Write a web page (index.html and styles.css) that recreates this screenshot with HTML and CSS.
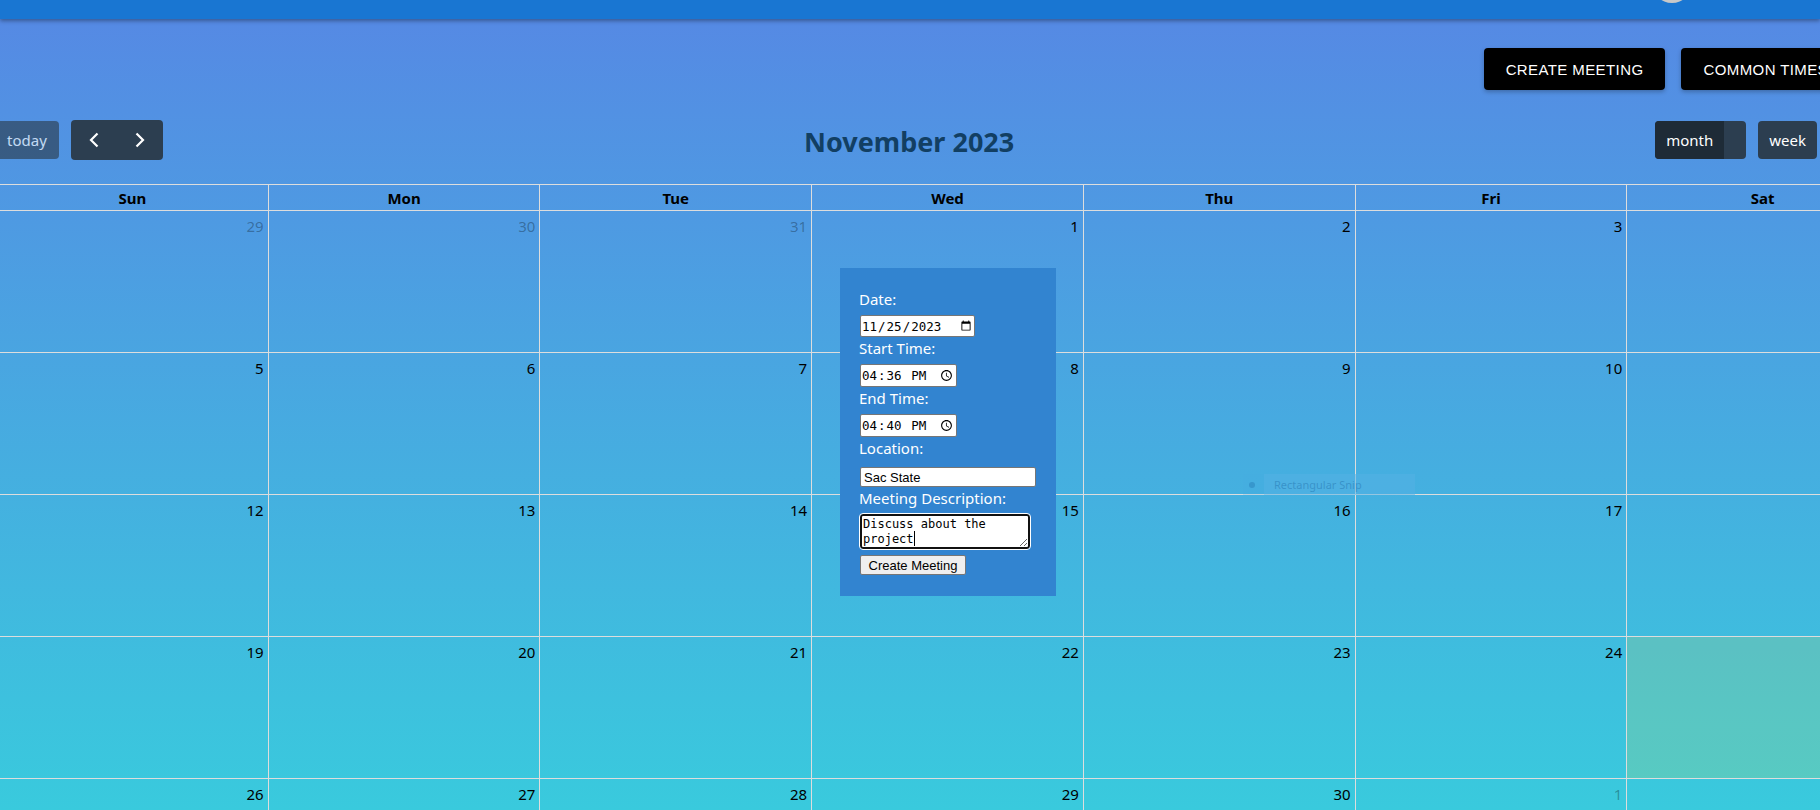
FILE: index.html
```html
<!DOCTYPE html>
<html lang="en">

<head>
  <meta charset="UTF-8">
  <meta name="viewport" content="width=device-width, initial-scale=1.0">
  <title>Calendar</title>
  <link rel="stylesheet" href="styles.css">
</head>

<body>
  <div class="topbar">
    <div class="avatar"></div>
  </div>

  <div class="page">
    <div class="actions">
      <button class="action-btn">CREATE MEETING</button>
      <button class="action-btn">COMMON TIMES</button>
    </div>

    <div class="toolbar">
      <div class="tb-group">
        <button class="fc-btn today">today</button>
        <div class="nav-btns">
          <button class="fc-btn arrow">
            <svg width="12" height="16" viewBox="0 0 12 16"><path d="M9.5 1.5 L3 8 L9.5 14.5" fill="none" stroke="#fff" stroke-width="2.2"/></svg>
          </button>
          <button class="fc-btn arrow">
            <svg width="12" height="16" viewBox="0 0 12 16"><path d="M2.5 1.5 L9 8 L2.5 14.5" fill="none" stroke="#fff" stroke-width="2.2"/></svg>
          </button>
        </div>
      </div>
      <h2 class="title">November 2023</h2>
      <div class="tb-group">
        <div class="view-month">
          <button class="fc-btn month">month</button>
          <span class="month-rest"></span>
        </div>
        <button class="fc-btn">week</button>
        <button class="fc-btn day-btn">day</button>
      </div>
    </div>

    <div class="calendar">
      <div class="head">Sun</div>
      <div class="head">Mon</div>
      <div class="head">Tue</div>
      <div class="head">Wed</div>
      <div class="head">Thu</div>
      <div class="head">Fri</div>
      <div class="head">Sat</div>

      <div class="day other">29</div>
      <div class="day other">30</div>
      <div class="day other">31</div>
      <div class="day">1</div>
      <div class="day">2</div>
      <div class="day">3</div>
      <div class="day">4</div>

      <div class="day">5</div>
      <div class="day">6</div>
      <div class="day">7</div>
      <div class="day">8</div>
      <div class="day">9</div>
      <div class="day">10</div>
      <div class="day">11</div>

      <div class="day">12</div>
      <div class="day">13</div>
      <div class="day">14</div>
      <div class="day">15</div>
      <div class="day">16</div>
      <div class="day">17</div>
      <div class="day">18</div>

      <div class="day">19</div>
      <div class="day">20</div>
      <div class="day">21</div>
      <div class="day">22</div>
      <div class="day">23</div>
      <div class="day">24</div>
      <div class="day current"></div>

      <div class="day">26</div>
      <div class="day">27</div>
      <div class="day">28</div>
      <div class="day">29</div>
      <div class="day">30</div>
      <div class="day other">1</div>
      <div class="day other">2</div>
    </div>
  </div>

  <!-- meeting popup -->
  <form class="popup">
    <label class="field-label">Date:</label>
    <input class="field date" type="date" value="2023-11-25">
    <label class="field-label">Start Time:</label>
    <input class="field time" type="time" value="16:36">
    <label class="field-label">End Time:</label>
    <input class="field time" type="time" value="16:40">
    <label class="field-label location-label">Location:</label>
    <input class="field location" type="text" value="Sac State">
    <label class="field-label">Meeting Description:</label>
    <div class="desc-wrap">
      <textarea class="desc">Discuss about the project</textarea>
      <span class="caret"></span>
    </div>
    <button class="submit" type="button">Create Meeting</button>
  </form>

  <!-- faint snipping tool leftover -->
  <div class="snip">
    <span class="snip-dot"></span>
    <span class="snip-label">Rectangular Snip</span>
  </div>
</body>

</html>
```

FILE: styles.css
```css
* {
  margin: 0;
  padding: 0;
  box-sizing: border-box;
}

html,
body {
  width: 1820px;
  height: 810px;
  overflow: hidden;
}

body {
  font-family: "Noto Sans", "Liberation Sans", sans-serif;
  font-size: 15px;
  background: linear-gradient(180deg, #5688e4 0%, #39cadd 100%);
}

.topbar {
  position: relative;
  height: 19px;
  background-color: #1976d2;
  box-shadow: 0 2px 4px rgba(0, 0, 0, .35);
  overflow: hidden;
}

.avatar {
  position: absolute;
  left: 1652px;
  top: -37px;
  width: 40px;
  height: 40px;
  border-radius: 50%;
  background-color: #c8c8c8;
}

.page {
  width: 1902px;
  margin-left: -3px;
}

.actions {
  display: flex;
  justify-content: flex-end;
  gap: 16px;
  height: 101px;
  padding: 29px 49px 0 0;
}

.action-btn {
  height: 42px;
  padding: 0 22px;
  background-color: #000;
  color: #fff;
  border: none;
  border-radius: 4px;
  font-family: "Liberation Sans", Arial, sans-serif;
  font-size: 15px;
  letter-spacing: .4px;
  box-shadow: 0 2px 4px rgba(0, 0, 0, .25);
}

.toolbar {
  display: flex;
  justify-content: space-between;
  align-items: flex-start;
  height: 64px;
}

.tb-group {
  display: flex;
  align-items: center;
  gap: 12px;
  height: 40px;
}

.fc-btn {
  height: 38px;
  padding: 0 11px;
  background-color: #2c3e50;
  color: #fff;
  border: none;
  border-radius: 4px;
  font-family: "Noto Sans", "Liberation Sans", sans-serif;
  font-size: 15px;
}

.today {
  width: 62px;
  padding: 0 0 0 10px;
  text-align: left;
  opacity: .65;
}

.nav-btns {
  display: flex;
  height: 40px;
  background-color: #2c3e50;
  border-radius: 4px;
}

.arrow {
  display: flex;
  align-items: center;
  justify-content: center;
  width: 46px;
  height: 40px;
  padding: 0;
  background: none;
}

.title {
  font-size: 27px;
  font-weight: 700;
  line-height: 44px;
  color: #123f63;
}

.view-month {
  display: flex;
  width: 91px;
  height: 38px;
  background-color: #2c3e50;
  border-radius: 4px;
}

.month {
  width: 69px;
  padding: 0;
  background-color: #1e2b37;
  border-radius: 4px 0 0 4px;
}

.day-btn {
  width: 70px;
}

.calendar {
  display: grid;
  grid-template-columns: repeat(7, 1fr);
  grid-auto-rows: 142px;
  grid-template-rows: 26px;
  border-top: 1px solid #ddd;
}

.head {
  padding-top: 1px;
  border-right: 1px solid #ddd;
  border-bottom: 1px solid #ddd;
  font-weight: 700;
  line-height: 24px;
  text-align: center;
  color: #000;
}

.day {
  padding: 5px 4px 0 0;
  border-right: 1px solid #ddd;
  border-bottom: 1px solid #ddd;
  text-align: right;
  line-height: 20px;
  color: #000;
}

.day.other {
  color: rgba(0, 0, 0, .3);
}

.day.current {
  background-color: rgba(255, 220, 40, .15);
}

.popup {
  position: absolute;
  left: 840px;
  top: 268px;
  width: 216px;
  height: 328px;
  padding: 20px;
  background-color: #3284d0;
}

.field-label {
  display: block;
  height: 22px;
  margin-bottom: 5px;
  line-height: 22px;
  text-indent: -1px;
  color: #fff;
}

.location-label {
  margin-bottom: 8px;
}

.field {
  display: block;
  height: 22px;
  background-color: #fff;
  color: #000;
  border: 1px solid #767676;
  border-radius: 2px;
}

.date {
  width: 115px;
  font-family: "DejaVu Sans Mono", monospace;
  font-size: 12.5px;
}

.time {
  width: 97px;
  height: 23px;
  font-family: "DejaVu Sans Mono", monospace;
  font-size: 12.5px;
}

.location {
  width: 176px;
  height: 20px;
  padding-left: 3px;
  font-family: "Liberation Sans", Arial, sans-serif;
  font-size: 13px;
}

.desc-wrap {
  position: relative;
  width: 170px;
  height: 35px;
}

.desc {
  display: block;
  width: 170px;
  height: 35px;
  padding: 1px 1px 0;
  border: 2px solid #111;
  border-radius: 3px;
  outline: 1px solid #fff;
  font-family: "DejaVu Sans Mono", monospace;
  font-size: 12px;
  line-height: 15px;
  color: #000;
}

.caret {
  position: absolute;
  left: 54px;
  top: 17px;
  width: 1px;
  height: 15px;
  background-color: #000;
}

.submit {
  display: block;
  width: 106px;
  height: 20px;
  margin-top: 6px;
  background-color: #efefef;
  color: #000;
  border: 1px solid #767676;
  border-radius: 2px;
  font-family: "Liberation Sans", Arial, sans-serif;
  font-size: 13px;
}

.snip {
  position: absolute;
  left: 1243px;
  top: 474px;
  display: flex;
  align-items: center;
  gap: 9px;
  width: 172px;
  height: 21px;
  padding-left: 6px;
  background-color: rgba(70, 170, 225, .2);
  font-family: "Noto Sans", sans-serif;
  font-size: 11px;
  color: rgba(30, 110, 170, .45);
}

.snip-dot {
  width: 6px;
  height: 6px;
  border-radius: 50%;
  background-color: rgba(30, 110, 170, .35);
}

.snip-label {
  display: flex;
  align-items: center;
  width: 151px;
  height: 21px;
  padding-left: 10px;
  background-color: rgba(90, 180, 230, .4);
}
```
